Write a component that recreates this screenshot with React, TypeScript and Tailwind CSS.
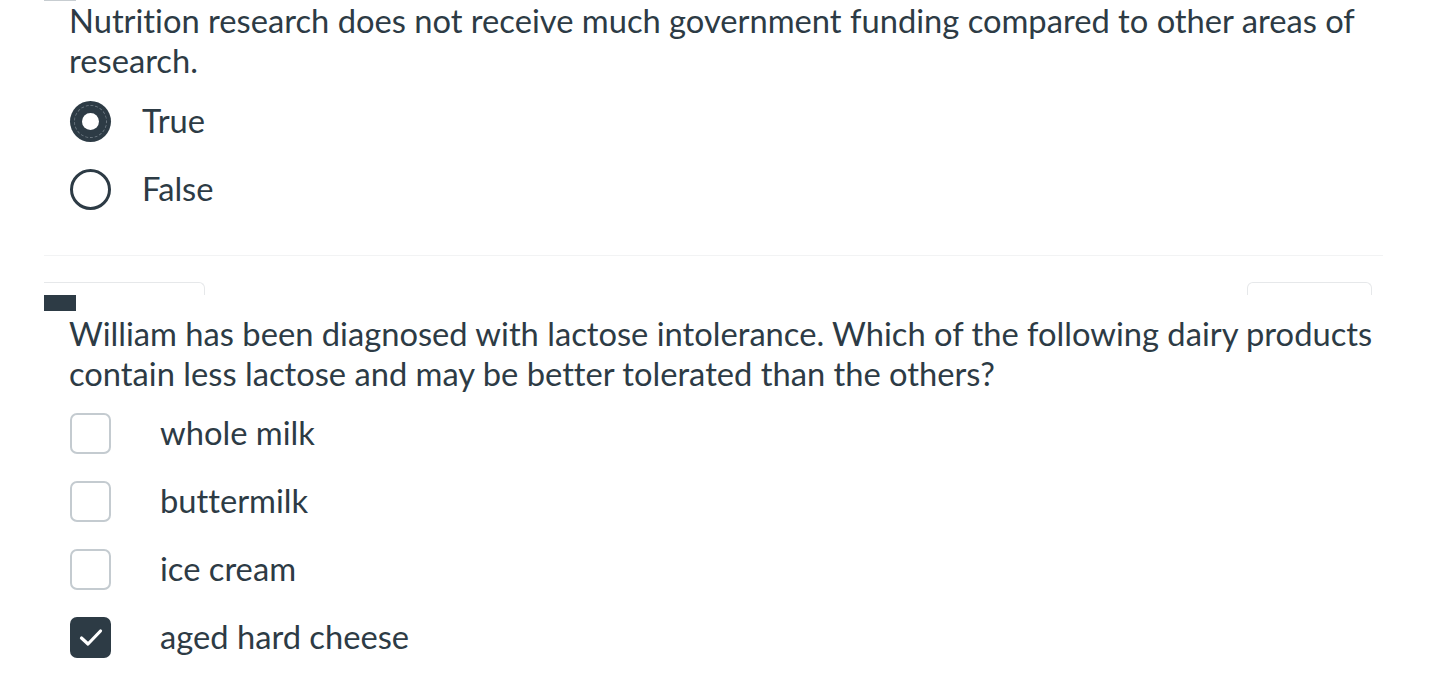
import React from "react";

const font = { fontFamily: "Lato, 'Liberation Sans', sans-serif", fontVariantLigatures: "none" as const };

function Radio({ checked, label }: { checked?: boolean; label: string }) {
  return (
    <div className="flex h-[68px] items-center">
      <div className="ml-[70px] flex h-[41px] w-[41px] items-center justify-center">
        {checked ? (
          <div className="relative flex h-[41px] w-[41px] items-center justify-center rounded-full bg-[#2d3b45]">
            <div className="absolute inset-[4px] rounded-full border border-dashed border-[#6b7780]" />
            <div className="relative h-[17px] w-[17px] rounded-full bg-white" />
          </div>
        ) : (
          <div className="h-[41px] w-[41px] rounded-full border-[3px] border-[#2d3b45] bg-white" />
        )}
      </div>
      <span className="ml-[31px] whitespace-nowrap text-[32.7px] leading-[40px] text-[#2d3b45]">{label}</span>
    </div>
  );
}

function Check({ checked, label }: { checked?: boolean; label: string }) {
  return (
    <div className="flex h-[68px] items-center">
      <div className="ml-[70px] h-[41px] w-[41px]">
        {checked ? (
          <div className="flex h-[41px] w-[41px] items-center justify-center rounded-[7px] bg-[#2d3b45]">
            <svg width="24" height="19" viewBox="0 0 24 19" fill="none">
              <path d="M2.5 10 L9 16 L21.5 3" stroke="white" strokeWidth="3.2" strokeLinecap="round" strokeLinejoin="round" />
            </svg>
          </div>
        ) : (
          <div className="h-[41px] w-[41px] rounded-[7px] border-2 border-[#c4cbd0] bg-white" />
        )}
      </div>
      <span className="ml-[49px] whitespace-nowrap text-[32.7px] leading-[40px] text-[#2d3b45]">{label}</span>
    </div>
  );
}

export default function App() {
  return (
    <div className="h-[694px] w-[1442px] overflow-hidden bg-white" style={font}>
      <div className="ml-[44px] h-px w-[32px] bg-[#c7cdd1]" />
      <div className="ml-[69px] whitespace-nowrap text-[32.7px] leading-[40px] text-[#2d3b45]">
        Nutrition research does not receive much government funding compared to other areas of
        <br />
        research.
      </div>
      <div className="mt-[6px]">
        <Radio checked label="True" />
        <Radio label="False" />
      </div>
      <div className="ml-[44px] mt-[32px] h-px w-[1339px] bg-[#f2f3f4]" />
      <div className="ml-[44px] mt-[26px] flex w-[1328px] justify-between">
        <div className="h-[13px] w-[161px] rounded-tr-[6px] border-r border-t border-[#e6e8ea]" />
        <div className="h-[13px] w-[125px] rounded-t-[6px] border-l border-r border-t border-[#e6e8ea]" />
      </div>
      <div className="ml-[44px] h-[16px] w-[32px] bg-[#2d3b45]" />
      <div className="ml-[69px] mt-[3px] whitespace-nowrap text-[32.7px] leading-[40px] text-[#2d3b45]">
        William has been diagnosed with lactose intolerance. Which of the following dairy products
        <br />
        contain less lactose and may be better tolerated than the others?
      </div>
      <div className="mt-[5px]">
        <Check label="whole milk" />
        <Check label="buttermilk" />
        <Check label="ice cream" />
        <Check checked label="aged hard cheese" />
      </div>
    </div>
  );
}
